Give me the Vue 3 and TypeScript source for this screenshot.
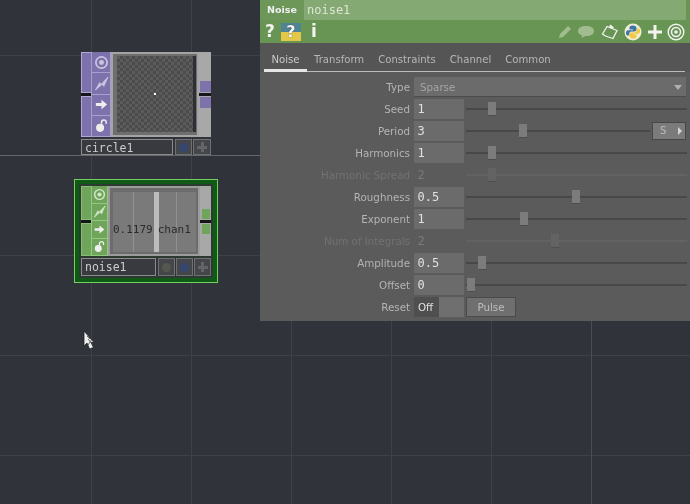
<script setup lang="ts">
interface Row {
  label: string
  value: string
  pos: number
  off?: boolean
  ext?: boolean
}
const tabs = ['Noise', 'Transform', 'Constraints', 'Channel', 'Common']
const rows: Row[] = [
  { label: 'Seed', value: '1', pos: 22 },
  { label: 'Period', value: '3', pos: 53, ext: true },
  { label: 'Harmonics', value: '1', pos: 22 },
  { label: 'Harmonic Spread', value: '2', pos: 22, off: true },
  { label: 'Roughness', value: '0.5', pos: 106 },
  { label: 'Exponent', value: '1', pos: 54 },
  { label: 'Num of Integrals', value: '2', pos: 85, off: true },
  { label: 'Amplitude', value: '0.5', pos: 12 },
  { label: 'Offset', value: '0', pos: 1 }
]
const nodes = [
  { id: 'circle', name: 'circle1', selected: false },
  { id: 'noise', name: 'noise1', selected: true }
]
</script>

<template>
  <div class="canvas">
    <div v-for="n in nodes" :key="n.id" class="node" :class="[n.id, { selected: n.selected }]">
      <div class="body">
        <div class="strip">
          <i></i>
          <b></b>
          <i></i>
        </div>
        <div class="flags">
          <span class="flag">
            <svg viewBox="0 0 16 16"><circle cx="8" cy="8" r="6" fill="none" stroke="currentColor" stroke-width="1.8" /><circle cx="8" cy="8" r="2.6" fill="currentColor" /></svg>
          </span>
          <span class="flag">
            <svg viewBox="0 0 16 16"><path d="M1.500 15 6 7l1.500 2L15 1 10.500 11 8.500 9Z" fill="currentColor" stroke="currentColor" stroke-width=".8" /></svg>
          </span>
          <span class="flag">
            <svg viewBox="0 0 16 16"><path d="M2 6.500h6V3l6 5-6 5V9.500H2Z" fill="#eee" /></svg>
          </span>
          <span class="flag">
            <svg viewBox="0 0 16 16"><circle cx="6.500" cy="10.500" r="4.300" fill="#eee" /><path d="M8 6V4.500a2.500 2.500 0 0 1 5 0V6" fill="none" stroke="#eee" stroke-width="1.600" /></svg>
          </span>
        </div>
        <div class="viewer">
          <div v-if="n.id === 'circle'" class="checker"><em></em></div>
          <div v-else class="chop">
            <u></u><u class="bright"></u><u></u>
            <span class="readout"><span>0.1179</span><span>chan1</span></span>
          </div>
        </div>
        <div class="outs">
          <i></i>
          <b></b>
          <i></i>
        </div>
      </div>
      <div class="namebar">
        <span class="nodename">{{ n.name }}</span>
        <span v-if="n.selected" class="nbtn"><s class="dot gray"></s></span>
        <span class="nbtn"><s class="dot blue"></s></span>
        <span class="nbtn"><s class="plus"></s></span>
      </div>
    </div>

    <svg class="cursor" viewBox="0 0 12 20" width="12" height="20">
      <path d="M1 1v15l3-3 2.500 6 4-1.500-2.500-5H11Z" fill="#eee" stroke="#222" stroke-width=".8" />
      <path d="M5 9l5 6M9 9l-4 6M4 6l3 3" stroke="#444" stroke-width=".8" />
    </svg>

    <section class="panel">
      <header class="head">
        <span class="optype">Noise</span>
        <span class="opname">noise1</span>
      </header>
      <div class="tools">
        <span class="q">?</span>
        <span class="pyhelp"><span>?</span></span>
        <span class="q info">i</span>
        <span class="grow"></span>
        <svg class="tool" viewBox="0 0 18 18" width="18" height="18"><path d="M3 15l1-4 8-8 3 3-8 8Z" fill="#a1bd8f" /></svg>
        <svg class="tool speech" viewBox="0 0 20 18" width="20" height="18"><path d="M10 3c5 0 8 2 8 5s-3 5-8 5l-1 .2L5.500 15l.7-2.600C3.500 12 2 10 2 8c0-3 3-5 8-5Z" fill="#a1bd8f" /></svg>
        <svg class="tool" viewBox="0 0 18 18" width="18" height="18"><path d="M1.500 11 6 3.500l10 4-4 8-7.500-2.500Z" fill="none" stroke="#f1f1f1" stroke-width="1.300" /><path d="M9.500 1.500l3.500 3-2 1.500-3-2.500Z" fill="#f1f1f1" /></svg>
        <svg class="tool" viewBox="0 0 18 18" width="18" height="18">
          <circle cx="9" cy="9" r="8.500" fill="#f0ecd8" />
          <path d="M9 2.500c-3 0-3.500 1.200-3.500 2.500v1.500H9v.8H4c-1.500 0-2 1.500-2 2.700s.5 2.500 2 2.500h1.300V10.500c0-1.300 1-2 2.200-2h3c1.200 0 2-.8 2-2V5c0-1.500-1.500-2.500-3.500-2.500Z" fill="#3d74a5" />
          <path d="M9 15.500c3 0 3.500-1.200 3.500-2.500v-1.500H9v-.8h5c1.500 0 2-1.500 2-2.700s-.5-2.500-2-2.500h-1.300v2c0 1.300-1 2-2.200 2h-3c-1.200 0-2 .8-2 2V13c0 1.500 1.500 2.500 3.500 2.500Z" fill="#f2c93c" />
        </svg>
        <svg class="tool" viewBox="0 0 16 16" width="16" height="16"><path d="M6.500 1h3v5.500H15v3H9.500V15h-3V9.500H1v-3h5.500Z" fill="#f3f3f3" /></svg>
        <svg class="tool last" viewBox="0 0 18 18" width="18" height="18"><circle cx="9" cy="9" r="7.800" fill="none" stroke="#f1f1f1" stroke-width="1.500" /><circle cx="9" cy="9" r="4.500" fill="none" stroke="#f1f1f1" stroke-width="1.500" /><circle cx="9" cy="9" r="1.800" fill="#f1f1f1" /></svg>
      </div>
      <nav class="tabs">
        <span v-for="(t, i) in tabs" :key="t" class="tab" :class="{ active: i === 0 }">{{ t }}</span>
      </nav>
      <div class="params">
        <div class="row">
          <label class="lab">Type</label>
          <div class="menu"><span>Sparse</span><i></i></div>
        </div>
        <div v-for="r in rows" :key="r.label" class="row" :class="{ off: r.off }">
          <label class="lab">{{ r.label }}</label>
          <span class="field">{{ r.value }}</span>
          <div class="track" :class="{ short: r.ext }">
            <span class="handle" :style="{ left: r.pos + 'px' }"></span>
          </div>
          <span v-if="r.ext" class="sbtn">S<i></i></span>
        </div>
        <div class="row">
          <label class="lab">Reset</label>
          <div class="toggle"><span>Off</span><i></i></div>
          <span class="pulse">Pulse</span>
        </div>
      </div>
    </section>
  </div>
</template>

<style>
html, body { margin: 0; background: #30333a; }
</style>

<style scoped>
.canvas {
  position: relative;
  width: 690px;
  height: 504px;
  overflow: hidden;
  background-color: #30333a;
  background-image:
    linear-gradient(#65676b, #65676b),
    linear-gradient(#4a4d55, #4a4d55),
    linear-gradient(to right, #3e4148 1px, transparent 1px),
    linear-gradient(#3e4148 1px, transparent 1px);
  background-size: 690px 1px, 1px 504px, 100px 100px, 100px 100px;
  background-position: 0 155px, 591px 0, 91px 0, 0 55px;
  background-repeat: no-repeat, no-repeat, repeat, repeat;
  font-family: "DejaVu Sans", sans-serif;
  filter: blur(0.35px);
}

/* nodes */
.node { position: absolute; left: 81px; width: 130px; box-sizing: border-box; }
.circle { top: 52px; --tone: #7d72ac; --ink: #cbc6e0; }
.noise { top: 186px; --tone: #6fa55b; --ink: #d4e6ca; }
.selected {
  outline: 1px solid #74cf62;
  outline-offset: 6px;
  box-shadow: 0 0 0 2px #2c3a32, 0 0 0 6px #0f5a15;
}
.selected::after {
  content: "";
  position: absolute;
  left: 0;
  right: 0;
  top: 70px;
  height: 2px;
  background: #2c3a32;
}
.body { display: flex; background: #a8a8a8; height: 85px; }
.noise .body { height: 70px; }
.strip { width: 10px; display: flex; flex-direction: column; }
.strip i { flex: 1; background: var(--tone); border: 1px solid #b1a8d4; border-right: 0; box-sizing: border-box; }
.noise .strip i { border-color: #87bf72; }
.strip b, .outs b { height: 3px; background: #15161a; flex: none; }
.flags { width: 20px; display: flex; flex-direction: column; background: var(--tone); color: var(--ink); }
.noise .flags { width: 17px; }
.flag {
  flex: 1;
  display: flex;
  align-items: center;
  justify-content: center;
  border: 1px solid #a89fd0;
  border-top-width: 0;
  box-sizing: border-box;
}
.noise .flag { border-color: #94c880; }
.flag svg { width: 15px; height: 15px; }
.noise .flag svg { width: 13px; height: 13px; }
.viewer {
  flex: 1;
  background: #6e6e6e;
  border: 2px solid #a4a4a4;
  padding: 2px 1px 3px 4px;
  display: flex;
  min-width: 0;
}
.noise .viewer { background: #6c6c6c; border-color: #9c9c9c; padding: 4px 2px 2px 3px; }
.checker {
  flex: 1;
  position: relative;
  background-color: #555;
  background-image: conic-gradient(#4c4c4c 25%, #5b5b5b 0 50%, #4c4c4c 0 75%, #5b5b5b 0);
  background-size: 6px 6px;
  border-right: 3px solid #2d2f35;
  display: flex;
  align-items: center;
  justify-content: center;
}
.checker em { width: 2px; height: 2px; background: #fff; display: block; }
.chop {
  flex: 1;
  position: relative;
  background: #7a7a7a;
  display: flex;
  justify-content: space-between;
  padding: 0 19px 0 20px;
}
.chop u { width: 1px; background: #919191; display: block; text-decoration: none; }
.chop u.bright { width: 5px; background: #bcbcbc; margin-left: 2px; }
.readout {
  position: absolute;
  left: 0;
  right: 0;
  top: 31px;
  display: flex;
  gap: 5px;
  font: 11px "DejaVu Sans Mono", monospace;
  color: #2b2b2b;
}
.outs { width: 12px; display: flex; flex-direction: column; }
.noise .outs { width: 11px; }
.outs i { flex: 1; display: flex; flex-direction: column; justify-content: flex-end; }
.outs i::after { content: ""; height: 11px; background: var(--tone); margin: 0 0 1px 1px; }
.noise .outs i::after { margin: 0 1px 1px 2px; height: 10px; }
.outs i:last-child { justify-content: flex-start; }
.outs i:last-child::after { margin: 1px 0 0 1px; }
.noise .outs i:last-child::after { margin: 1px 1px 0 2px; }
.namebar { display: flex; gap: 1px; margin-top: 2px; height: 16px; }
.noise .namebar { height: 18px; }
.nodename {
  flex: 1;
  box-sizing: border-box;
  border: 1px solid #8b8b8b;
  background: #383a40;
  color: #cdcdcd;
  font: 11.500px/16px "DejaVu Sans Mono", monospace;
  padding-left: 3px;
  margin-right: 1px;
}
.noise .nodename { line-height: 16px; }
.nbtn {
  width: 17px;
  flex: none;
  box-sizing: border-box;
  border: 1px solid #6f7073;
  background: #45464a;
  display: flex;
  align-items: center;
  justify-content: center;
}
.circle .nbtn:last-child { width: 18px; }
.dot { width: 9px; height: 9px; border-radius: 50%; display: block; }
.dot.blue { background: #37466f; }
.dot.gray { background: #55574f; }
.plus {
  width: 10px;
  height: 10px;
  display: block;
  background: linear-gradient(#636467, #636467) center / 10px 3px no-repeat, linear-gradient(#636467, #636467) center / 3px 10px no-repeat;
}
.cursor { position: absolute; left: 83px; top: 330px; }

/* panel */
.panel {
  position: absolute;
  left: 260px;
  top: 0;
  width: 430px;
  height: 321px;
  background: #5b5b5b;
  display: flex;
  flex-direction: column;
}
.head { height: 20px; display: flex; background: #689553; }
.optype {
  width: 44px;
  background: #6d9759;
  color: #f0f0f0;
  font-size: 9.500px;
  font-weight: 700;
  line-height: 20px;
  text-align: center;
}
.opname {
  flex: 1;
  background: #84a972;
  font: 12px/21px "DejaVu Sans Mono", monospace;
  color: #dde6d4;
  padding-left: 3px;
  margin-right: 4px;
}
.tools {
  height: 23px;
  display: flex;
  align-items: center;
  background: #689553;
  padding-left: 5px;
}
.q { color: #f2f2f2; font: 700 17px/23px "DejaVu Sans", sans-serif; width: 12px; }
.info { margin-left: 10px; width: auto; }
.pyhelp {
  width: 20px;
  height: 18px;
  margin-left: 4px;
  background: linear-gradient(#4f8396 50%, #e3c748 50%);
  color: #f6f6f6;
  font: 700 16px/18px "DejaVu Sans", sans-serif;
  text-align: center;
  text-shadow: 0 0 1px #222;
}
.grow { flex: 1; }
.tool { margin-left: 5px; flex: none; }
.tool.speech { margin-left: 2px; }
.tool.last { margin: 0 5px 0 4px; }
.tabs {
  height: 29px;
  box-sizing: border-box;
  display: flex;
  padding: 0 4px;
  background: #555 linear-gradient(#bdbdbd, #bdbdbd) 4px 28px / 421px 1px no-repeat;
}
.tab {
  color: #b7b7b7;
  font-size: 10.100px;
  line-height: 34px;
  padding: 0 7px;
  height: 29px;
  box-sizing: border-box;
  white-space: nowrap;
}
.tab.active { color: #c9c9c9; padding: 0 7.500px; border-bottom: 3px solid #e6e6e6; }
.params { flex: 1; padding-top: 4px; background: #5b5b5b; }
.row { height: 22px; display: flex; align-items: center; }
.lab {
  width: 150px;
  text-align: right;
  color: #b4b4b4;
  font-size: 10.300px;
  margin-right: 4px;
  flex: none;
  white-space: nowrap;
}
.off .lab { color: #727272; }
.menu {
  width: 272px;
  height: 20px;
  box-sizing: border-box;
  background: #6b6b6b;
  border-bottom: 1px solid #4c4c4c;
  color: #a5a5a5;
  font-size: 10.300px;
  padding-left: 6px;
  padding-top: 1px;
  display: flex;
  justify-content: space-between;
  align-items: center;
}
.menu i {
  width: 0;
  height: 0;
  margin-right: 4px;
  border: 4.500px solid transparent;
  border-top: 5px solid #b0b0b0;
  border-bottom: 0;
}
.field {
  width: 50px;
  height: 20px;
  box-sizing: border-box;
  background: #6b6b6b;
  color: #e0e0e0;
  font: 12px/21px "DejaVu Sans Mono", monospace;
  padding-left: 3.500px;
  flex: none;
}
.off .field { background: transparent; color: #7a7a7a; }
.track {
  width: 221px;
  height: 2px;
  margin-left: 2px;
  background: #484848;
  position: relative;
  flex: none;
}
.track.short { width: 184px; }
.off .track { background: #626262; }
.handle {
  position: absolute;
  top: -6px;
  width: 8px;
  height: 14px;
  background: #7c7c7c;
  border-bottom: 1px solid #4d4d4d;
  box-sizing: border-box;
}
.off .handle { background: #636363; }
.sbtn {
  width: 34px;
  height: 18px;
  margin-left: 2px;
  box-sizing: border-box;
  background: #7b7b7b;
  border: 1px solid #484848;
  color: #bdbdbd;
  font-size: 10px;
  line-height: 16px;
  padding-left: 7px;
  display: flex;
  justify-content: space-between;
  align-items: center;
}
.sbtn i {
  width: 0;
  height: 0;
  margin-right: 3px;
  border: 4px solid transparent;
  border-left: 4px solid #d5d5d5;
  border-right: 0;
}
.toggle {
  width: 50px;
  height: 20px;
  display: flex;
  background: #6f6f6f;
  color: #e2e2e2;
  font-size: 10.300px;
  line-height: 20px;
  flex: none;
}
.toggle span { width: 25px; background: #4f4f4f; padding-left: 4px; box-sizing: border-box; }
.toggle i { flex: 1; }
.pulse {
  width: 50px;
  height: 20px;
  margin-left: 2px;
  box-sizing: border-box;
  background: #6f6f6f;
  border: 1px solid #4a4a4a;
  color: #bdbdbd;
  font-size: 10.300px;
  line-height: 18px;
  text-align: center;
}
</style>
